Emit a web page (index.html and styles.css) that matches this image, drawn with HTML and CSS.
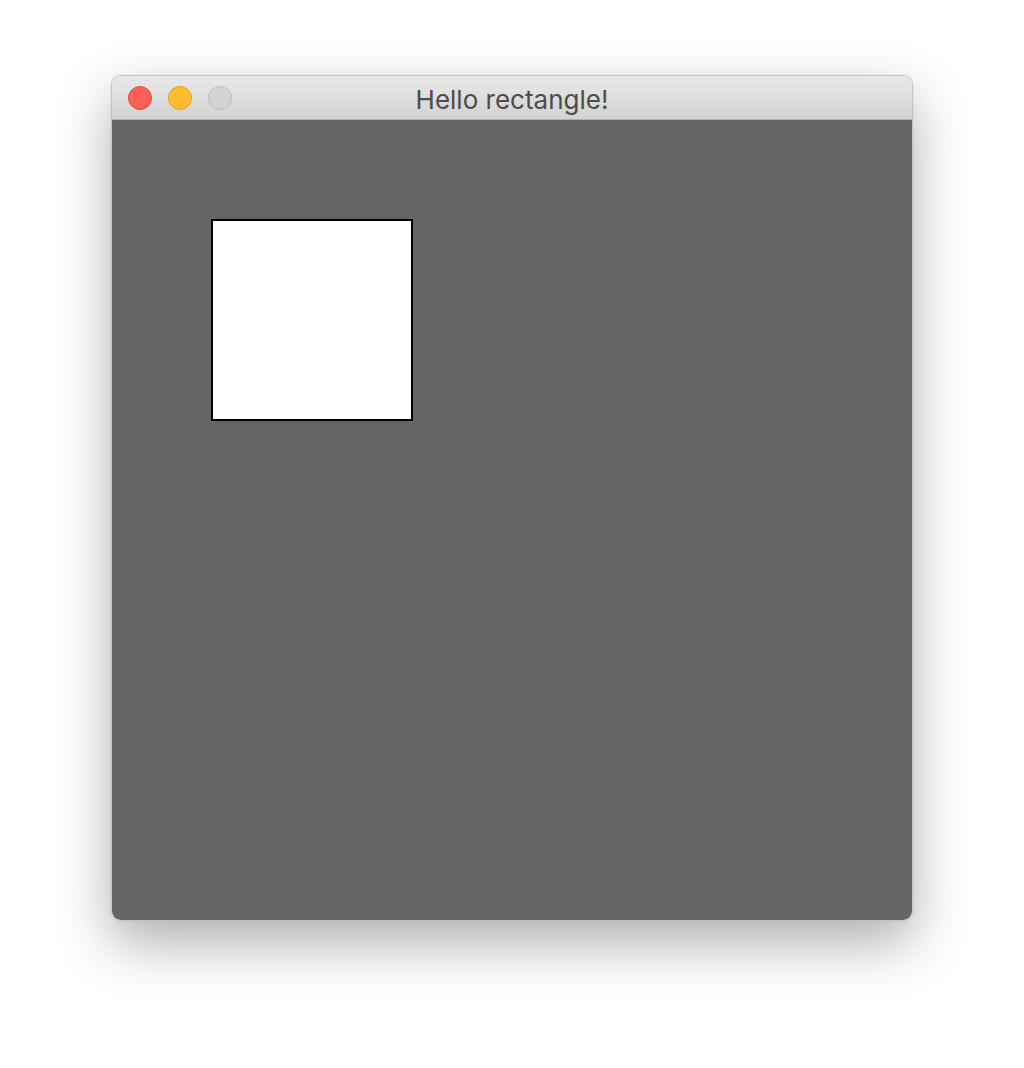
FILE: index.html
```html
<!DOCTYPE html>
<html>
<head>
<meta charset="utf-8">
<link rel="stylesheet" href="styles.css">
</head>
<body>
<div class="desktop">
  <div class="window">
    <div class="titlebar">
      <div class="lights">
        <span class="light close"></span>
        <span class="light minimize"></span>
        <span class="light zoom"></span>
      </div>
      <div class="title">Hello rectangle!</div>
    </div>
    <div class="content">
      <div class="rect"></div>
    </div>
  </div>
</div>
</body>
</html>
```
FILE: styles.css
```css
html, body {
  margin: 0;
  padding: 0;
  background: #ffffff;
}
.desktop {
  width: 1024px;
  height: 1068px;
  padding: 75px 0 0 111px;
  box-sizing: border-box;
}
.window {
  width: 802px;
  border: 1px solid #c4c4c4;
  border-radius: 10px;
  overflow: hidden;
  box-sizing: border-box;
  box-shadow: 0 22px 55px rgba(0, 0, 0, 0.32), 0 0 1px rgba(0,0,0,0.3);
}
.titlebar {
  height: 43px;
  position: relative;
  display: flex;
  align-items: center;
  justify-content: center;
  background: linear-gradient(#e9e9e9, #d2d2d2);
  border-bottom: 1px solid #b0b0b0;
}
.lights {
  position: absolute;
  left: 16px;
  top: 10px;
  display: flex;
  gap: 16px;
}
.light {
  width: 24px;
  height: 24px;
  border-radius: 50%;
  box-sizing: border-box;
}
.close { background: #fe5f57; border: 1px solid #e2463f; }
.minimize { background: #febc2e; border: 1px solid #e1a116; }
.zoom { background: #d3d3d3; border: 1px solid #bdbdbd; }
.title {
  font-family: Inter, "Liberation Sans", Arial, sans-serif;
  font-size: 26px;
  color: #4c4c4c;
  padding-top: 3px;
}
.content {
  height: 800px;
  background: #646464;
  padding: 99px 0 0 99px;
  box-sizing: border-box;
}
.rect {
  width: 202px;
  height: 202px;
  box-sizing: border-box;
  background: #ffffff;
  border: 2px solid #000000;
}
```
